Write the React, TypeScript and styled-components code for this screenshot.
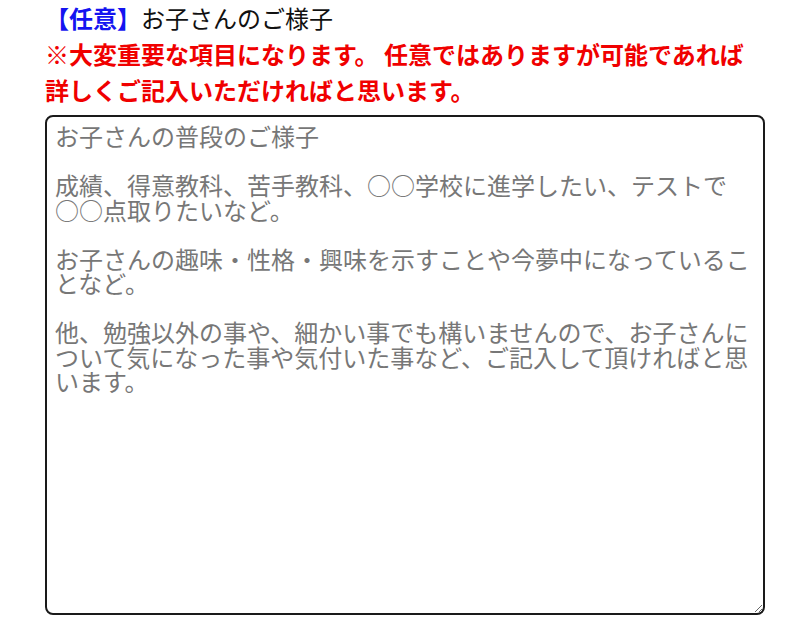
import React from "react";
import styled, { createGlobalStyle } from "styled-components";

const GlobalStyle = createGlobalStyle`
  html, body {
    margin: 0;
    padding: 0;
    background: #fff;
  }
  body {
    font-family: "Noto Sans CJK JP", "Noto Sans", sans-serif;
  }
`;

const Section = styled.section`
  padding: 0 42px 0 45px;
  width: 720px;
`;

const Label = styled.h3`
  margin: 0;
  font-size: 24px;
  font-weight: 400;
  line-height: 36px;
  color: #111;
`;

const Tag = styled.span`
  color: #1414f0;
  font-weight: 700;
`;

const Notice = styled.p`
  margin: 0 0 7px;
  font-size: 24px;
  font-weight: 700;
  line-height: 36px;
  color: #f00000;
`;

const Textarea = styled.textarea`
  display: block;
  box-sizing: border-box;
  width: 720px;
  height: 500px;
  padding: 7px 8px;
  border: 2.5px solid #1a1a1a;
  border-radius: 8px;
  font-family: "Noto Sans CJK JP", "Noto Sans", sans-serif;
  font-size: 24px;
  line-height: 24.5px;
  color: #222;
  outline: none;
  &::placeholder {
    color: #777;
  }
`;

const placeholder =
  "お子さんの普段のご様子\n\n" +
  "成績、得意教科、苦手教科、○○学校に進学したい、テストで○○点取りたいなど。\n\n" +
  "お子さんの趣味・性格・興味を示すことや今夢中になっていることなど。\n\n" +
  "他、勉強以外の事や、細かい事でも構いませんので、お子さんについて気になった事や気付いた事など、ご記入して頂ければと思います。";

const App = () => {
  return (
    <>
      <GlobalStyle />
      <Section>
        <Label>
          <Tag>【任意】</Tag>お子さんのご様子
        </Label>
        <Notice>
          ※大変重要な項目になります。 任意ではありますが可能であれば
          <br />
          詳しくご記入いただければと思います。
        </Notice>
        <Textarea placeholder={placeholder} />
      </Section>
    </>
  );
};

export default App;
